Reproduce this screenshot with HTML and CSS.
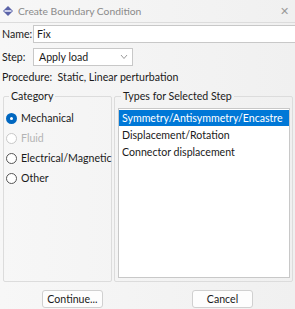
FILE: index.html
```html
<!DOCTYPE html>
<html lang="en">
<head>
  <meta charset="UTF-8">
  <title>Create Boundary Condition</title>
  <link rel="stylesheet" href="styles.css">
</head>
<body>
  <div class="dialog">
    <div class="titlebar">
      <svg class="app-icon" width="10" height="10" viewBox="0 0 10 10">
        <polygon points="5,0 10,5 5,10 0,5" fill="#5b63a8"/>
        <rect x="1.5" y="4" width="7" height="2" fill="#c9cde8"/>
      </svg>
      <span class="title">Create Boundary Condition</span>
      <span class="close">&#x2715;</span>
    </div>

    <div class="fields">
      <div class="field">
        <label>Name:</label>
        <div class="input">Fix</div>
      </div>
      <div class="field">
        <label>Step:</label>
        <div class="select">
          <span>Apply load</span>
          <svg width="8" height="6" viewBox="0 0 8 6"><polyline points="1,1 4,4.5 7,1" fill="none" stroke="#9a9a9a" stroke-width="1"/></svg>
        </div>
      </div>
      <div class="procedure">Procedure:&nbsp; Static, Linear perturbation</div>
    </div>

    <div class="groups">
      <fieldset class="group category">
        <legend>Category</legend>
        <div class="radio checked"><span class="dot"></span>Mechanical</div>
        <div class="radio disabled"><span class="dot"></span>Fluid</div>
        <div class="radio"><span class="dot"></span>Electrical/Magnetic</div>
        <div class="radio"><span class="dot"></span>Other</div>
      </fieldset>
      <fieldset class="group types">
        <legend>Types for Selected Step</legend>
        <div class="list">
          <div class="item selected">Symmetry/Antisymmetry/Encastre</div>
          <div class="item">Displacement/Rotation</div>
          <div class="item">Connector displacement</div>
        </div>
      </fieldset>
    </div>

    <div class="buttons">
      <button>Continue...</button>
      <button>Cancel</button>
    </div>
  </div>
</body>
</html>
```

FILE: styles.css
```css
body {
  margin: 0;
  background: #f3f3f3;
  color: #1a1a1a;
  font-family: Lato, "Noto Sans", sans-serif;
  font-size: 10.6px;
}

.dialog {
  width: 295px;
  height: 309px;
  display: flex;
  flex-direction: column;
  background: linear-gradient(to right, #f7f7f7, #f0f0f0);
  overflow: hidden;
}

.titlebar {
  height: 22px;
  display: flex;
  align-items: center;
  padding: 0 6px 0 3px;
  border-bottom: 1px solid #dcdcdc;
}

.app-icon { margin-right: 5px; }

.title {
  flex: 1;
  color: #8a8a8a;
  font-size: 10.3px;
}

.close {
  color: #9a9a9a;
  font-size: 11px;
}

.fields {
  padding: 2px 0 0 2px;
}

.field {
  display: flex;
  align-items: center;
  height: 18px;
  margin-bottom: 5px;
}

.field label {
  width: 31px;
  flex-shrink: 0;
}

.input {
  flex: 1;
  height: 16px;
  line-height: 16px;
  padding-left: 3px;
  background: #fff;
  border: 1px solid #c8c8c8;
  border-right: none;
}

.select {
  width: 89px;
  height: 16px;
  display: flex;
  align-items: center;
  justify-content: space-between;
  padding: 0 4px 0 5px;
  background: #fff;
  border: 1px solid #c8c8c8;
}

.procedure {
  margin-top: 1px;
  height: 14px;
}

.groups {
  display: flex;
  gap: 2px;
  padding: 5px 2px 0 3px;
  height: 192px;
}

.group {
  margin: 0;
  padding: 0;
  border: 1px solid #dcdcdc;
  border-radius: 2px;
  min-width: 0;
}

.group legend {
  padding: 0 2px;
  margin-left: 3px;
}

.category {
  width: 105px;
  padding: 6px 0 0 2px;
}

.radio {
  display: flex;
  align-items: center;
  height: 20px;
}

.dot {
  flex-shrink: 0;
  width: 9px;
  height: 9px;
  border: 1px solid #555;
  border-radius: 50%;
  margin-right: 4px;
  background: #fff;
  box-sizing: content-box;
}

.radio.checked .dot {
  width: 3px;
  height: 3px;
  border: 4px solid #0067c0;
}

.radio.disabled { color: #b4b4b4; }
.radio.disabled .dot { border-color: #c8c8c8; }

.types {
  flex: 1;
  padding: 6px 2px 3px 3px;
}

.list {
  height: 100%;
  box-sizing: border-box;
  background: #fff;
  border: 1px solid #c8c8c8;
  padding-top: 1px;
}

.item {
  height: 16px;
  line-height: 16px;
  padding-left: 3px;
  margin-bottom: 1px;
}

.item.selected {
  background: #0078d7;
  color: #fff;
}

.buttons {
  display: flex;
  gap: 89px;
  padding: 8px 0 0 42px;
}

.buttons button {
  width: 61px;
  height: 18px;
  font-family: inherit;
  font-size: 10.6px;
  color: #1a1a1a;
  background: #fdfdfd;
  border: 1px solid #d0d0d0;
  border-radius: 3px;
  padding: 0;
}
```
